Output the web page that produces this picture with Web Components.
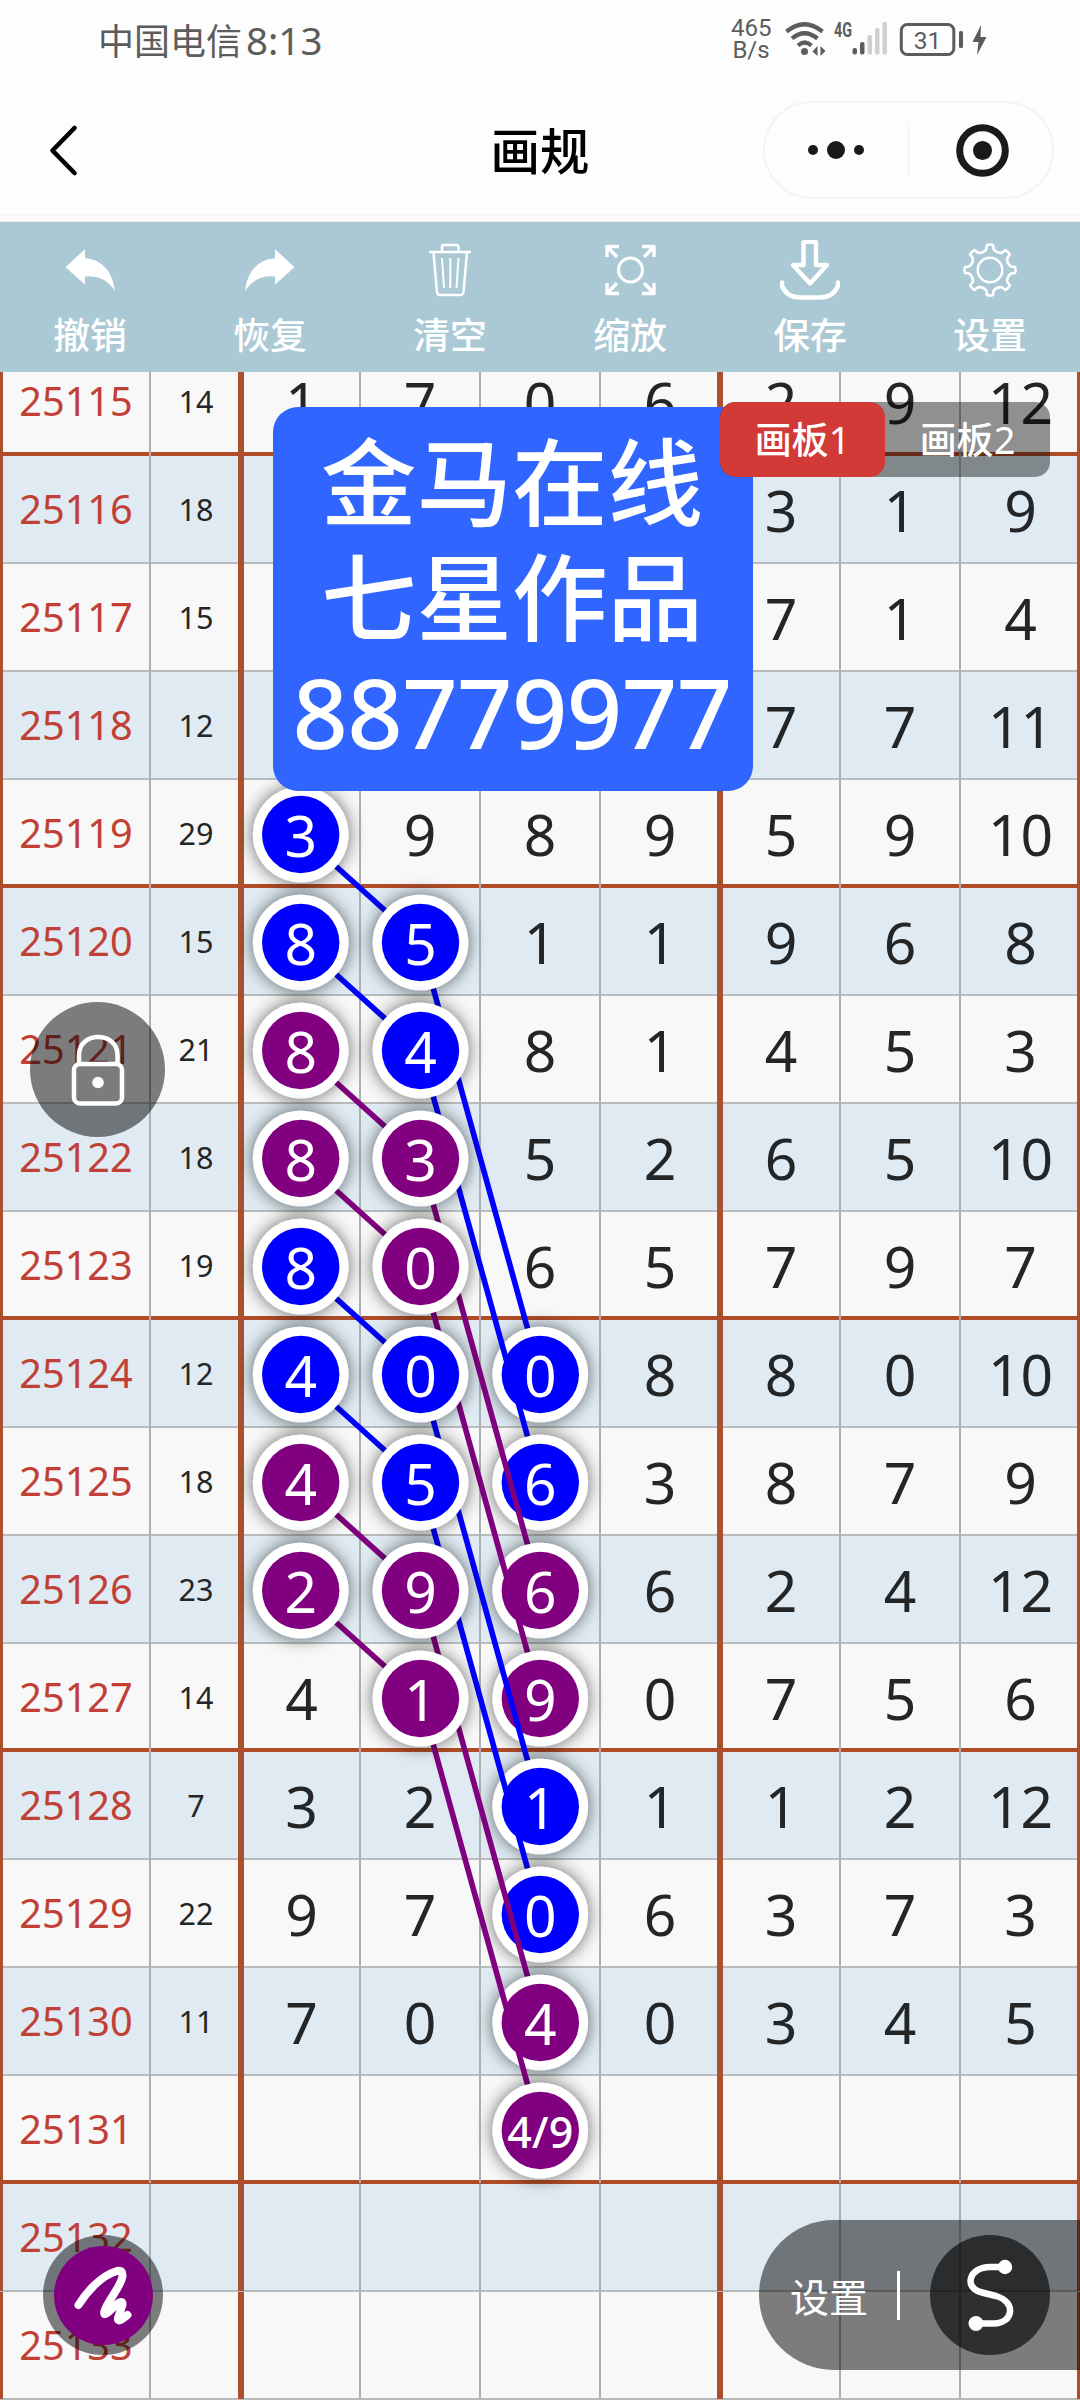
<!DOCTYPE html>
<html lang="zh-CN">
<head>
<meta charset="utf-8">
<title>画规</title>
<style>
html,body{margin:0;padding:0;background:#fdfdfd}
body{width:1080px;height:2400px;overflow:hidden;font-family:"Noto Sans","Noto Sans CJK SC",sans-serif}
</style>
</head>
<body>
<draw-screen></draw-screen>
<script>
const define = (name, html, init) => customElements.define(name, class extends HTMLElement {
  constructor() {
    super();
    this.attachShadow({ mode: 'open' });
  }
  connectedCallback() {
    this.shadowRoot.innerHTML = typeof html === 'function' ? html(this) : html;
    if (init) init(this.shadowRoot, this);
  }
});

const CJK = '"Noto Sans CJK SC","Noto Sans",sans-serif';

/* eight-toothed gear outline, centred on 30,30 */
function gear() {
  const p = (r, a) => {
    const t = a * Math.PI / 180;
    return (30 + r * Math.sin(t)).toFixed(1) + ' ' + (30 - r * Math.cos(t)).toFixed(1);
  };
  let d = '';
  for (let i = 0; i < 8; i++) {
    const a = i * 45;
    d += (i ? 'L' : 'M') + p(25.2, a - 7) + 'Q' + p(26, a) + ' ' + p(25.2, a + 7) +
      'L' + p(21, a + 10) + 'Q' + p(18, a + 22.5) + ' ' + p(21, a + 35);
  }
  return d + 'Z';
}

const icons = {
  undo: '<path fill="#fff" stroke="none" d="M5.4 27.3 25 9.3V18.2C42 19.5 52.500 31 55 51 48 40 38 35.500 25 36.500V44.500Z"/>',
  redo: '<path fill="#fff" stroke="none" d="M54.600 27.300 35 9.300V18.200C18 19.500 7.500 31 5 51 12 40 22 35.500 35 36.500V44.500Z"/>',
  trash: '<path stroke-width="2.500" d="M9 12H51M22 11.500V7Q22 5 24 5H36.500Q38.500 5 38.500 7V11.500M13.500 12.500 17 52Q17.300 55 20 55H40.500Q43.200 55 43.500 52L47 12.500"/><path stroke-width="2" d="M22 18 24 48M30.300 18V48M38.500 18 36.500 48"/>',
  zoom: '<circle cx="30.500" cy="30" r="12" stroke-width="3"/><path stroke-width="3.400" d="M7 17V6.500H19M7 6.500 17 17M42 6.500H54V17M54 6.500 44 17M7 43V53.500H19M7 53.500 17 43M42 53.500H54V43M54 53.500 44 43"/>',
  save: '<path stroke-width="4.400" d="M23.500 3.500Q23.500 1.800 25 1.800H34.500Q36 1.800 36 3.500V25H47L30 43.500 13 25H23.500Z"/><path stroke-width="4.400" stroke-linecap="round" d="M2 42.500V46Q7 57.500 20 57.500H40Q53 57.500 58 46V42.500"/>',
  gear: '<circle cx="30" cy="30" r="12.300" stroke-width="2.500"/><path stroke-width="2.500" d="' + gear() + '"/>'
};

define('status-bar', `
<style>
:host{display:flex;height:76px;align-items:flex-start;justify-content:space-between;padding:0 91px 0 98px;box-sizing:border-box;color:#5c5c5c}
.left{display:flex;align-items:center;height:79px;gap:4px;font:36px/79px ${CJK}}
.left b{font:400 38.500px/79px "Noto Sans",sans-serif;padding-top:1px}
.right{display:flex;align-items:flex-start;padding-top:17px}
.speed{font:24px/22px Roboto,sans-serif;text-align:center;width:40px;margin-right:14px;white-space:nowrap}
svg{display:block}
</style>
<div class="left"><span>中国电信</span><b>8:13</b></div>
<div class="right"><div class="speed">465<br>B/s</div>
<svg width="204" height="45" viewBox="786 17 204 45" fill="none" stroke="#5c5c5c">
<g stroke-width="4.200"><path d="M787.500 31.500Q805.500 17 823.500 31.500"/><path d="M793 38.500Q805.500 28 818.500 38.500"/><path d="M799 45.500Q805.500 39.500 812.500 45.500"/></g>
<circle cx="805.500" cy="51.500" r="3.500" fill="#5c5c5c" stroke="none"/>
<path d="M818.500 46V56L813.500 51.500ZM821.500 46V56L826.500 51Z" fill="#5c5c5c" stroke="none"/>
<text x="835" y="36.500" textLength="18" lengthAdjust="spacingAndGlyphs" font-family="Roboto" font-weight="700" font-size="20" fill="#5c5c5c" stroke="none">4G</text>
<g stroke="none" fill="#5c5c5c"><rect x="853.500" y="48" width="4.500" height="6.500" rx="2"/><rect x="861" y="42" width="4.500" height="12.500" rx="2"/>
<g fill="#d0d0d0"><rect x="868.500" y="35" width="4.500" height="19.500" rx="1.500"/><rect x="876" y="28" width="4.500" height="26.500" rx="1.500"/><rect x="883.500" y="22" width="4.500" height="32.500" rx="1.500"/></g>
<rect x="960" y="31" width="4" height="17" rx="1.500"/><path d="M982 25 973.500 42H979.500L978 55 987.500 37H981.500Z"/></g>
<rect x="902.300" y="24.500" width="52.500" height="30" rx="6" stroke-width="3"/>
<text x="928.500" y="48.500" text-anchor="middle" font-family="Roboto" font-size="24.500" fill="#5c5c5c" stroke="none">31</text>
</svg></div>`);

define('nav-bar', `
<style>
:host{display:grid;grid-template-columns:1fr auto 1fr;height:146px;align-items:center;box-sizing:border-box;padding:0 26px 0 49px;border-bottom:1px solid #f0e6e2;background:linear-gradient(#fdfdfd 95%,#f6f6f6 96%,#fdfdfd 97%)}
h1{margin:1px 0 0 -23px;font:500 49.500px/70px ${CJK};color:#000}
.back{display:block;margin-top:2px}
.capsule{justify-self:end;width:291px;height:98px;border:2px solid #f3f3f3;border-radius:49px;box-sizing:border-box;display:flex;align-items:center;margin-top:3px}
.capsule svg{display:block}
</style>
<svg class="back" width="30" height="54" viewBox="0 0 30 54" fill="none" stroke="#000" stroke-width="4.600" stroke-linecap="round" stroke-linejoin="round"><path d="M25.500 5 3.500 27.500 25.500 50"/></svg>
<h1><slot></slot></h1>
<div class="capsule"><svg width="287" height="94" viewBox="0 0 287 94"><g fill="#1a1a1a"><circle cx="48" cy="47" r="5"/><circle cx="71" cy="47" r="9"/><circle cx="94" cy="47" r="5"/><circle cx="217.500" cy="47.500" r="9.500"/></g><circle cx="217.500" cy="47.500" r="22.800" fill="none" stroke="#1a1a1a" stroke-width="7"/><path d="M143.500 18V74" stroke="#f4f4f4" stroke-width="2"/></svg></div>`);

define('tool-button', el => `
<style>
:host{display:flex;flex-direction:column;align-items:center;width:180px;padding-top:18px;box-sizing:border-box;color:#fff;font:500 36.800px/50px ${CJK}}
svg{display:block}
span{margin-top:8px}
</style>
<svg width="60" height="60" viewBox="0 0 60 60" fill="none" stroke="#fff" stroke-linejoin="round">${icons[el.getAttribute('icon')]}</svg><span><slot></slot></span>`);

define('tool-bar', `
<style>:host{display:flex;height:149.500px;background:#abc9d5;position:relative;z-index:1}</style>
<tool-button icon="undo">撤销</tool-button><tool-button icon="redo">恢复</tool-button><tool-button icon="trash">清空</tool-button><tool-button icon="zoom">缩放</tool-button><tool-button icon="save">保存</tool-button><tool-button icon="gear">设置</tool-button>`);

/* period, sum, then the seven drawn numbers; _ is an empty cell */
const rows = `25115 14 1 7 0 6 2 9 12
25116 18 _ _ _ _ 3 1 9
25117 15 _ _ _ _ 7 1 4
25118 12 _ _ _ _ 7 7 11
25119 29 _ 9 8 9 5 9 10
25120 15 _ _ 1 1 9 6 8
25121 21 _ _ 8 1 4 5 3
25122 18 _ _ 5 2 6 5 10
25123 19 _ _ 6 5 7 9 7
25124 12 _ _ _ 8 8 0 10
25125 18 _ _ _ 3 8 7 9
25126 23 _ _ _ 6 2 4 12
25127 14 4 _ _ 0 7 5 6
25128 7 3 2 _ 1 1 2 12
25129 22 9 7 _ 6 3 7 3
25130 11 7 0 _ 0 3 4 5
25131 _ _ _ _ _ _ _ _
25132 _ _ _ _ _ _ _ _
25133 _ _ _ _ _ _ _ _`.split('\n').map(r => r.split(' ').map(v => v === '_' ? '' : v));

define('draw-row', el => `
<style>
:host{display:grid;grid-template-columns:151px 93px 117px 120px 120px 122px 118px 120px 119px;height:108px;box-sizing:border-box;border-bottom:2px solid #b9bbbb;background:#f8f8f8;color:#232527}
:host([tint]){background:#dfeaf2}
:host([major]){border-bottom:4px solid #b04c27}
div{border-right:2px solid #adb0b1;text-align:center;font-size:57px;line-height:108px;height:100%;box-sizing:border-box;white-space:nowrap}
.id{font-size:39.700px;line-height:107px;color:#c23f35;border-left:3px solid #aa502e}
.sum{font-size:30.500px;line-height:107px;padding-left:3px}
.sum,.d3{border-right:6px solid #aa502e}
.d3{padding-left:2px}
.d6{border-right:3px solid #aa502e;padding-left:3px}
</style>` + el.cells.map((v, i) => `<div class="${i === 0 ? 'id' : i === 1 ? 'sum' : 'd' + (i - 2)}">${v}</div>`).join(''));

/* three-point traces: column 1, one row down in column 2, four rows down in column 3 */
const B = '#0000ff', P = '#800080';
const traces = [
  [B, 4, '3', '5', '0'], [B, 5, '8', '4', '6'], [P, 6, '8', '3', '6'], [P, 7, '8', '0', '9'],
  [B, 8, '8', '0', '1'], [B, 9, '4', '5', '0'], [P, 10, '4', '9', '4'], [P, 11, '2', '1', '4/9']
];
define('trace-layer', () => {
  const x = [300.7, 420.5, 540.3];
  let s = '';
  for (const [color, r, ...v] of traces) {
    const y = [r, r + 1, r + 5].map(n => n * 108 + 54.5);
    s += `<polyline points="${x.map((a, i) => a + ',' + y[i]).join(' ')}" fill="none" stroke="${color}" stroke-width="5.600"/>`;
    v.forEach((t, i) => {
      const pair = t.length > 1;
      s += `<circle cx="${x[i]}" cy="${y[i]}" r="47.800" fill="#fff" filter="url(#sh)"/><circle cx="${x[i]}" cy="${y[i]}" r="38.700" fill="${color}"/>` +
        `<text x="${x[i]}" y="${y[i] + (pair ? 17.5 : 22)}" font-size="${pair ? 43 : 57}" font-weight="${pair ? 500 : 400}"${pair ? ' textLength="66"' : ''}>${t}</text>`;
    });
  }
  return `<style>:host{position:absolute;left:0;top:0;width:1080px;height:2052px}svg{display:block}text{fill:#fff;text-anchor:middle;font-family:"Noto Sans",sans-serif}</style>
<svg width="1080" height="2052"><defs><filter id="sh" x="-40%" y="-40%" width="180%" height="180%"><feDropShadow dx="0" dy="0" stdDeviation="8.500" flood-color="#000" flood-opacity=".6"/></filter></defs>${s}</svg>`;
});

define('number-chart', `
<style>
:host{display:block;height:2028.500px;overflow:hidden}
.sheet{position:relative;margin-top:-23.500px}
</style><div class="sheet"></div>`, root => {
  const sheet = root.querySelector('.sheet');
  rows.forEach((cells, i) => {
    const row = document.createElement('draw-row');
    row.cells = cells;
    row.toggleAttribute('tint', i % 2 === 1);
    row.toggleAttribute('major', i % 4 === 0);
    sheet.append(row);
  });
  sheet.append(document.createElement('trace-layer'));
});

define('text-sticker', `
<style>
:host{position:absolute;left:273px;top:407px;width:480px;height:384px;box-sizing:border-box;padding-top:13px;border-radius:25px;background:#3165ff;color:#fff;text-align:center;font:500 95.500px/115px ${CJK}}
div{height:115px;white-space:nowrap;padding-right:2px}
.num{font:500 97px/115px "Noto Sans",sans-serif;letter-spacing:-.6px;padding-top:4px}
</style>
<div>金马在线</div><div>七星作品</div><div class="num">88779977</div>`);

define('board-tabs', `
<style>
:host{position:absolute;left:720px;top:402px;width:330px;height:75px;display:flex;border-radius:15px;background:rgba(0,0,0,.42);overflow:hidden;color:#fff;font:500 37px/72px ${CJK}}
div{flex:1;text-align:center;white-space:nowrap}
i{font:38px/72px "Noto Sans",sans-serif}
.on{background:#d13a37;border-radius:15px}
</style><div class="on">画板<i>1</i></div><div>画板<i>2</i></div>`);

define('lock-button', `
<style>:host{position:absolute;left:30px;top:1002px;width:135px;height:135px;border-radius:50%;background:rgba(0,0,0,.5)}svg{display:block}</style>
<svg width="135" height="135" fill="none" stroke="#fff" stroke-width="4.500"><rect x="44" y="62" width="48" height="39.500" rx="6"/><path d="M49 61V53C49 29 87.500 29 87.500 53V61"/><circle cx="68" cy="80.500" r="5.800" fill="#fff" stroke="none"/></svg>`);

define('pen-button', `
<style>:host{position:absolute;left:43px;top:2235px;width:120px;height:120px;border-radius:50%;background:rgba(0,0,0,.5)}svg{display:block}</style>
<svg width="120" height="120"><circle cx="60.500" cy="60.500" r="49.500" fill="#800080"/><path d="M35.500 70C43 58 57 41 74 36Q80 34.500 79.500 41C78 52 65 65 61.500 76C60 82 64 79 73 70Q80 64 79.500 70L75 83Q74 89 84.500 80" fill="none" stroke="#fff" stroke-width="8" stroke-linecap="round" stroke-linejoin="round"/></svg>`);

define('settings-pill', `
<style>
:host{position:absolute;left:759px;top:2220px;width:321px;height:150px;box-sizing:border-box;padding:0 30px 0 31px;border-radius:75px 0 0 75px;background:rgba(0,0,0,.5);display:flex;align-items:center;color:#fff;font:39px/56px ${CJK}}
span{padding-bottom:1px}
hr{width:3px;height:49px;border:0;background:#fff;margin:0 30px 0 29px}
svg{display:block;border-radius:50%;background:rgba(0,0,0,.62);margin-left:auto}
</style><span>设置</span><hr>
<svg width="120" height="120"><g fill="#fff"><circle cx="75" cy="32" r="7.200"/><circle cx="46" cy="88.500" r="7.500"/></g><path d="M75 32H60C39 32 33 53 52 57.500L66 61C87 67 83 88.500 64 88.500H46" fill="none" stroke="#fff" stroke-width="6.500"/></svg>`);

define('draw-screen', `
<style>:host{display:flex;flex-direction:column;position:relative;width:1080px;height:2400px;overflow:hidden;background:#fdfdfd}
text-sticker,board-tabs,lock-button,pen-button,settings-pill{z-index:2}</style>
<status-bar></status-bar><nav-bar>画规</nav-bar><tool-bar></tool-bar><number-chart></number-chart>
<text-sticker></text-sticker><board-tabs></board-tabs><lock-button></lock-button><pen-button></pen-button><settings-pill></settings-pill>`);
</script>
</body>
</html>
